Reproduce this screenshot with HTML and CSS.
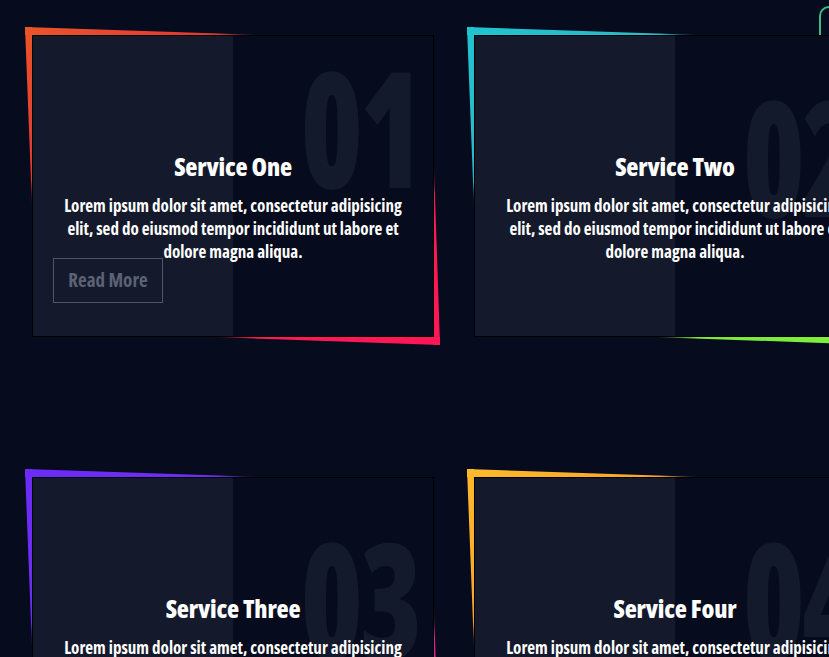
FILE: index.html
```html
<!DOCTYPE html>
<html lang="en">
<head>
<meta charset="utf-8">
<title>Services</title>
<link rel="stylesheet" href="styles.css">
</head>
<body>
<button class="toggle" aria-label="Toggle"></button>
<section class="grid">
  <article class="card card-1">
    <span class="wedge wedge-top"></span>
    <span class="wedge wedge-left"></span>
    <span class="wedge wedge-bottom"></span>
    <span class="wedge wedge-right"></span>
    <div class="panel">
      <span class="num num-raised">01</span>
      <h2 class="title">Service One</h2>
      <p class="text">Lorem ipsum dolor sit amet, consectetur adipisicing elit, sed do eiusmod tempor incididunt ut labore et dolore magna aliqua.</p>
      <a class="more" href="#">Read More</a>
    </div>
  </article>
  <article class="card card-2">
    <span class="wedge wedge-top"></span>
    <span class="wedge wedge-left"></span>
    <span class="wedge wedge-bottom"></span>
    <span class="wedge wedge-right"></span>
    <div class="panel">
      <span class="num">02</span>
      <h2 class="title">Service Two</h2>
      <p class="text">Lorem ipsum dolor sit amet, consectetur adipisicing elit, sed do eiusmod tempor incididunt ut labore et dolore magna aliqua.</p>
    </div>
  </article>
  <article class="card card-3">
    <span class="wedge wedge-top"></span>
    <span class="wedge wedge-left"></span>
    <span class="wedge wedge-bottom"></span>
    <span class="wedge wedge-right"></span>
    <div class="panel">
      <span class="num">03</span>
      <h2 class="title">Service Three</h2>
      <p class="text">Lorem ipsum dolor sit amet, consectetur adipisicing elit, sed do eiusmod tempor incididunt ut labore et dolore magna aliqua.</p>
    </div>
  </article>
  <article class="card card-4">
    <span class="wedge wedge-top"></span>
    <span class="wedge wedge-left"></span>
    <span class="wedge wedge-bottom"></span>
    <span class="wedge wedge-right"></span>
    <div class="panel">
      <span class="num">04</span>
      <h2 class="title">Service Four</h2>
      <p class="text">Lorem ipsum dolor sit amet, consectetur adipisicing elit, sed do eiusmod tempor incididunt ut labore et dolore magna aliqua.</p>
    </div>
  </article>
</section>
</body>
</html>
```
FILE: styles.css
```css
html {
  overflow: hidden;
  background: #060b1e;
}
body {
  margin: 0;
  background: #060b1e;
  color: #fff;
  font-family: "Open Sans", "Liberation Sans", sans-serif;
  font-stretch: 75%;
}
.toggle {
  position: absolute;
  top: 6px;
  left: 819px;
  width: 60px;
  height: 46px;
  border: 2px solid #3cbd7d;
  border-radius: 10px;
  background: transparent;
  padding: 0;
}
.grid {
  display: grid;
  grid-template-columns: repeat(2, 402px);
  grid-auto-rows: 302px;
  column-gap: 40px;
  row-gap: 140px;
  padding: 35px 0 0 32px;
}
.card {
  position: relative;
  --tl1: #ea5529;
  --tl2: #e23535;
  --br1: #ff1656;
  --br2: #ff1a55;
}
.card-2 { --tl1: #21c3d0; --tl2: #2bb9c6; --br1: #80f23a; --br2: #7ae83c; }
.card-3 { --tl1: #6c2bf7; --tl2: #6d2ef0; --br1: #e5208c; --br2: #e0218f; }
.card-4 { --tl1: #fdb92c; --tl2: #f9a42a; --br1: #ff5a36; --br2: #ff5a36; }

.wedge {
  position: absolute;
  z-index: 0;
}
.wedge-top {
  top: -8px;
  left: -7px;
  width: 235px;
  height: 8px;
  clip-path: polygon(0 0, 100% 100%, 0 100%);
  background: linear-gradient(90deg, var(--tl1) 0%, var(--tl2) 82%, rgba(0, 0, 0, 0) 100%);
}
.wedge-left {
  top: -8px;
  left: -7px;
  width: 7px;
  height: 180px;
  clip-path: polygon(0 0, 100% 0, 100% 100%);
  background: linear-gradient(180deg, var(--tl1) 0%, var(--tl2) 85%, rgba(0, 0, 0, 0) 100%);
}
.wedge-bottom {
  bottom: -8px;
  right: -6px;
  width: 230px;
  height: 8px;
  clip-path: polygon(0 0, 100% 0, 100% 100%);
  background: linear-gradient(270deg, var(--br1) 0%, var(--br2) 80%, rgba(0, 0, 0, 0) 100%);
}
.wedge-right {
  bottom: -8px;
  right: -6px;
  width: 6px;
  height: 178px;
  clip-path: polygon(0 0, 100% 100%, 0 100%);
  background: linear-gradient(0deg, var(--br1) 0%, var(--br2) 85%, rgba(0, 0, 0, 0) 100%);
}
.panel {
  position: relative;
  z-index: 1;
  box-sizing: border-box;
  height: 100%;
  border: 1px solid #000;
  background: linear-gradient(90deg, #141a2b 50%, #060b1e 50%);
  display: flex;
  flex-direction: column;
  align-items: center;
  padding: 115px 25px 0;
  text-align: center;
  overflow: hidden;
}
.num {
  position: absolute;
  top: 37px;
  right: 14px;
  font-size: 162px;
  line-height: 1;
  font-weight: 800;
  color: #131a2b;
  transform: scaleX(0.78);
  transform-origin: right center;
  letter-spacing: -4px;
}
.num-raised {
  top: 8px;
}
.title {
  position: relative;
  margin: 0;
  font-size: 25px;
  line-height: 31px;
  font-weight: 800;
  letter-spacing: -0.2px;
}
.text {
  position: relative;
  margin: 12px 0 0;
  max-width: 350px;
  font-size: 17px;
  line-height: 23px;
  font-weight: 700;
}
.more {
  position: absolute;
  left: 20px;
  top: 222px;
  box-sizing: border-box;
  width: 110px;
  height: 45px;
  border: 1px solid #4f5567;
  color: #5c6275;
  font-size: 19px;
  font-weight: 700;
  line-height: 43px;
  text-decoration: none;
  text-align: center;
}
```
